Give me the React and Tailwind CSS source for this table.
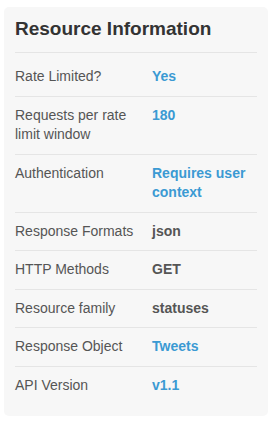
import React from 'react';

const rows = [
    { label: 'Rate Limited?', value: 'Yes', link: true },
    { label: 'Requests per rate limit window', value: '180', link: true },
    { label: 'Authentication', value: 'Requires user context', link: true },
    { label: 'Response Formats', value: 'json' },
    { label: 'HTTP Methods', value: 'GET' },
    { label: 'Resource family', value: 'statuses' },
    { label: 'Response Object', value: 'Tweets', link: true },
    { label: 'API Version', value: 'v1.1', link: true },
];

const App = () => {
    return (
        <div className="min-h-screen bg-white pt-[7px] px-[4px] font-['Liberation_Sans',Arial,sans-serif]">
            <div className="bg-[#f7f7f7] rounded-[5px] px-[11px] pt-[11px] pb-[12px]">
                <h3 className="text-[19px] leading-[22px] font-bold text-[#333] pb-[12px] border-b border-[#e5e5e5]">
                    Resource Information
                </h3>
                <div className="mt-[5px]">
                    {rows.map((row, i) => (
                        <div
                            key={row.label}
                            className={`flex py-[9px] text-[14px] leading-[19.5px] ${i < rows.length - 1 ? 'border-b border-[#e5e5e5]' : ''}`}
                        >
                            <div className="w-[137px] shrink-0 pr-[10px] text-[#555]">{row.label}</div>
                            <div className={`flex-1 font-bold ${row.link ? 'text-[#3b9ad3]' : 'text-[#555]'}`}>
                                {row.value}
                            </div>
                        </div>
                    ))}
                </div>
            </div>
        </div>
    );
};

export default App;
